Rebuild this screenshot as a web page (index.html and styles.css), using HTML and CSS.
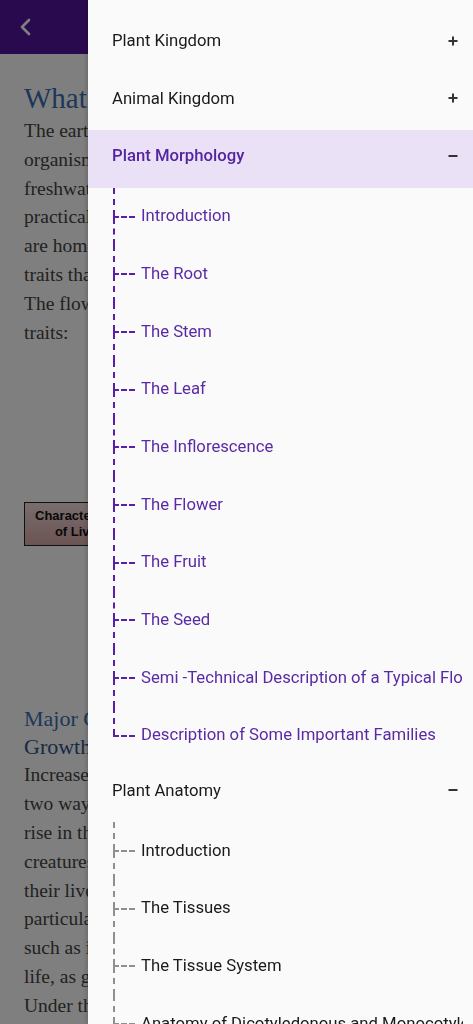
FILE: index.html
```html
<!DOCTYPE html>
<html lang="en">
<head>
    <meta charset="UTF-8">
    <meta name="viewport" content="width=device-width, initial-scale=1.0">
    <title>Biology Notes</title>
    <link rel="stylesheet" href="styles.css">
</head>
<body>
    <header class="top-bar">
        <button class="back-btn" aria-label="Back">
            <svg width="14" height="18" viewBox="0 0 14 18"><path d="M10 2 L3 9 L10 16" fill="none" stroke="#fff" stroke-width="2.6" stroke-linecap="round" stroke-linejoin="round"/></svg>
        </button>
    </header>

    <main class="page">
        <h1 class="page-title">What is Living?</h1>
        <p class="text">
            The earth is home to a very large variety of living<br>
            organisms. They are found on land, in the seas and<br>
            freshwater bodies, in hot springs and in the snow;<br>
            practically every corner of the world has them. They<br>
            are homes to plants, animals and microbes with<br>
            traits that set them apart from non-living things.<br>
            The flowing list gives the most commonly listed<br>
            traits:
        </p>

        <div class="diagram">
            <div class="diagram-box">Characteristics<br>of Living</div>
        </div>

        <h2 class="section-title">Major Characteristics</h2>
        <h3 class="sub-title">Growth</h3>
        <p class="text">
            Increase in mass and number of cells are the<br>
            two ways of growth. In plants, growth gives a<br>
            rise in the size of the body all through life. In<br>
            creatures like animals, it is seen only up to a point of<br>
            their lives, after which cells are only replaced. In<br>
            particular cases, growth comes from outside,<br>
            such as in mountains and sand mounds, which is not<br>
            life, as growth must be from within the body.<br>
            Under the microscope, single cells divide to grow.
        </p>
    </main>

    <div class="overlay"></div>

    <nav class="drawer">
        <ul class="menu">
            <li class="menu-row">
                <span>Plant Kingdom</span>
                <svg class="toggle" width="10" height="10" viewBox="0 0 10 10"><path d="M5 0.5 V9.5 M0.5 5 H9.5" stroke="#333" stroke-width="2"/></svg>
            </li>
            <li class="menu-row">
                <span>Animal Kingdom</span>
                <svg class="toggle" width="10" height="10" viewBox="0 0 10 10"><path d="M5 0.5 V9.5 M0.5 5 H9.5" stroke="#333" stroke-width="2"/></svg>
            </li>
            <li class="menu-row active">
                <span>Plant Morphology</span>
                <svg class="toggle" width="10" height="10" viewBox="0 0 10 10"><path d="M0.5 5 H9.5" stroke="#333" stroke-width="2"/></svg>
            </li>
            <li>
                <ul class="sub-list purple">
                    <li class="sub-item"><span class="branch"><i class="up"></i><i class="arm"></i><i class="down"></i></span><span class="label">Introduction</span></li>
                    <li class="sub-item"><span class="branch"><i class="up"></i><i class="arm"></i><i class="down"></i></span><span class="label">The Root</span></li>
                    <li class="sub-item"><span class="branch"><i class="up"></i><i class="arm"></i><i class="down"></i></span><span class="label">The Stem</span></li>
                    <li class="sub-item"><span class="branch"><i class="up"></i><i class="arm"></i><i class="down"></i></span><span class="label">The Leaf</span></li>
                    <li class="sub-item"><span class="branch"><i class="up"></i><i class="arm"></i><i class="down"></i></span><span class="label">The Inflorescence</span></li>
                    <li class="sub-item"><span class="branch"><i class="up"></i><i class="arm"></i><i class="down"></i></span><span class="label">The Flower</span></li>
                    <li class="sub-item"><span class="branch"><i class="up"></i><i class="arm"></i><i class="down"></i></span><span class="label">The Fruit</span></li>
                    <li class="sub-item"><span class="branch"><i class="up"></i><i class="arm"></i><i class="down"></i></span><span class="label">The Seed</span></li>
                    <li class="sub-item"><span class="branch"><i class="up"></i><i class="arm"></i><i class="down"></i></span><span class="label">Semi -Technical Description of a Typical Flowering Plant</span></li>
                    <li class="sub-item last"><span class="branch"><i class="up"></i><i class="arm"></i><i class="down"></i></span><span class="label">Description of Some Important Families</span></li>
                </ul>
            </li>
            <li class="menu-row">
                <span>Plant Anatomy</span>
                <svg class="toggle" width="10" height="10" viewBox="0 0 10 10"><path d="M0.5 5 H9.5" stroke="#333" stroke-width="2"/></svg>
            </li>
            <li>
                <ul class="sub-list grey">
                    <li class="sub-item"><span class="branch"><i class="up"></i><i class="arm"></i><i class="down"></i></span><span class="label">Introduction</span></li>
                    <li class="sub-item"><span class="branch"><i class="up"></i><i class="arm"></i><i class="down"></i></span><span class="label">The Tissues</span></li>
                    <li class="sub-item"><span class="branch"><i class="up"></i><i class="arm"></i><i class="down"></i></span><span class="label">The Tissue System</span></li>
                    <li class="sub-item last"><span class="branch"><i class="up"></i><i class="arm"></i><i class="down"></i></span><span class="label">Anatomy of Dicotyledonous and Monocotyledonous Plants</span></li>
                </ul>
            </li>
        </ul>
    </nav>
</body>
</html>
```

FILE: styles.css
```css
body {
    margin: 0;
    background-color: #ffffff;
    font-family: "Liberation Serif", "Times New Roman", serif;
    overflow: hidden;
}
.top-bar {
    height: 54px;
    background-color: #55159e;
    display: flex;
    align-items: center;
    padding-left: 19px;
}
.back-btn {
    background: none;
    border: none;
    padding: 0;
    display: flex;
}
.page {
    padding: 0 24px;
}
.page-title {
    margin: 25px 0 0;
    font-size: 29px;
    font-weight: normal;
    line-height: 38px;
    color: #3a6fb4;
}
.text {
    margin: 0;
    font-size: 19.5px;
    line-height: 28.8px;
    color: #444;
    white-space: nowrap;
}
.diagram {
    height: 358px;
    display: flex;
    align-items: center;
}
.diagram-box {
    width: 114px;
    margin-top: -4px;
    padding: 5px 0;
    border: 1px solid #222;
    background: linear-gradient(#f2dcdc, #d8a8a8);
    font-family: "Liberation Sans", Arial, sans-serif;
    font-size: 13px;
    font-weight: bold;
    line-height: 16px;
    text-align: center;
    color: #111;
}
.section-title {
    margin: 0;
    font-size: 22px;
    font-weight: normal;
    line-height: 28px;
    color: #3a6fb4;
}
.sub-title {
    margin: 0;
    font-size: 22px;
    font-weight: normal;
    line-height: 28px;
    color: #2f5588;
}
.overlay {
    position: fixed;
    inset: 0;
    background-color: rgba(0, 0, 0, 0.5);
}
.drawer {
    position: fixed;
    top: 0;
    bottom: 0;
    left: 88px;
    right: 0;
    background-color: #fafafa;
    box-shadow: -2px 0 4px rgba(0,0,0,0.15);
    overflow: hidden;
    font-family: Roboto, "Liberation Sans", Arial, sans-serif;
    font-size: 16.7px;
}
.menu {
    list-style: none;
    margin: 0;
    padding: 15px 0 0;
}
.menu-row {
    box-sizing: border-box;
    height: 57.6px;
    display: flex;
    align-items: center;
    justify-content: space-between;
    padding: 0 15px 6px 24px;
    color: #1a1a1a;
}
.menu-row.active {
    background-color: #ebe1f6;
    color: #5524a0;
    font-weight: 500;
}
.sub-list {
    list-style: none;
    margin: 0 10px 0 25px;
    padding: 0;
}
.sub-item {
    height: 57.7px;
    display: flex;
    align-items: stretch;
    overflow: hidden;
}
.branch {
    flex: none;
    width: 28px;
    display: flex;
    flex-direction: column;
}
.branch i {
    display: block;
}
.branch .up,
.branch .down {
    flex: 1;
    border-left: 2px dashed;
}
.branch .arm {
    width: 22px;
    border-top: 2px dashed;
}
.sub-item.last .down {
    border-left-color: transparent;
}
.label {
    align-self: center;
    white-space: nowrap;
    overflow: hidden;
    margin-top: -2px;
}
.purple .sub-item {
    color: #5a2aa6;
}
.purple .branch i {
    border-color: #5a1fa8;
}
.grey .sub-item {
    color: #1a1a1a;
}
.grey .branch i {
    border-color: #8f8f8f;
}
```
